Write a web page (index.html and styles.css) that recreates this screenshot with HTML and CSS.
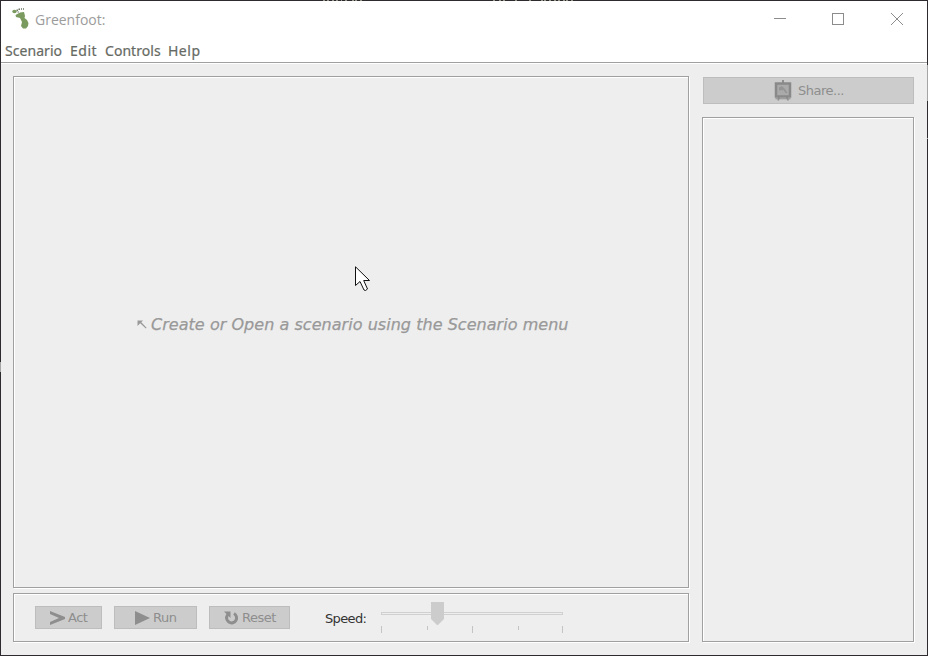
FILE: index.html
```
<!DOCTYPE html>
<html lang="en">
<head>
<meta charset="utf-8">
<title>Greenfoot</title>
<link rel="stylesheet" href="styles.css">
</head>
<body>
<div class="window">
  <header class="titlebar">
    <svg class="logo" width="18" height="22" viewBox="0 0 18 22">
      <path d="M3.500 7L8 4.500L12 4L13 8L12.500 10L15 12L16.500 15L16 18L14 20.500H11L9 18L10 14L8 10L4 9Z" fill="#7a9a60"/>
      <ellipse cx="2.500" cy="3.500" rx="2.200" ry="1.700" fill="#7a9a60"/>
      <path d="M4.500 1.500h1.500v1.500h-1.500zM6.500 .5h1.500v1.500h-1.500zM9 .3h1v1.500h-1zM11 .3h1v1.500h-1zM5.500 3.500h1.500v1h-1.500z" fill="#6b7562"/>
    </svg>
    <span class="title">Greenfoot:</span>
    <svg class="controls" width="130" height="14" viewBox="0 0 130 14" fill="none" stroke="#8c8c8c">
      <path d="M0 6.500h12"/>
      <rect x="58.500" y="1.500" width="11" height="11"/>
      <path d="M117 1l12 12M129 1l-12 12"/>
    </svg>
  </header>
  <nav class="menu">
    <span class="m-scenario">Scenario</span><span class="m-edit">Edit</span><span class="m-controls">Controls</span><span class="m-help">Help</span>
  </nav>
  <main class="content">
    <div class="left">
      <section class="etched world">
        <svg class="arrow" width="10" height="9" viewBox="0 0 10 9">
          <path d="M.5 .5H6L4.300 2.200L9.600 7.800L8.800 8.600L3.200 3.200L.5 6Z" fill="#999"/>
        </svg>
        <span class="hint">Create or Open a scenario using the Scenario menu</span>
      </section>
      <section class="etched panel">
        <button class="btn act"><svg width="15" height="14" viewBox="0 0 15 14"><path d="M0 0L15 6v2L0 14v-3L9 7L0 3Z" fill="#8e8e8e"/></svg><span>Act</span></button>
        <button class="btn run"><svg width="15" height="14" viewBox="0 0 15 14"><path d="M0 0L15 7L0 14Z" fill="#8e8e8e"/></svg><span>Run</span></button>
        <button class="btn reset"><svg width="15" height="14" viewBox="0 0 15 14"><path d="M10 2.500A5 5 0 1 1 3.500 4" fill="none" stroke="#8e8e8e" stroke-width="3"/><path d="M0 .5H6.500V7L4.500 5L2 5.500L2.500 3Z" fill="#8e8e8e"/></svg><span>Reset</span></button>
        <span class="speed">Speed:</span>
        <svg class="slider" width="184" height="32" viewBox="0 0 184 32">
          <rect x=".5" y="10.500" width="181" height="2" fill="#eee" stroke="#d0d0d0"/>
          <path d="M50 0h13v17L57 23h-1L50 17Z" fill="#ccc"/>
          <path d="M.5 24v7M46.500 24v4M91.500 24v7M137.500 24v4M181.500 24v7" stroke="#c4c4c4"/>
        </svg>
      </section>
    </div>
    <aside class="right">
      <button class="btn share">
        <svg width="18" height="21" viewBox="0 0 18 21">
          <path d="M8 0h2v3h-2zM4 17h2l-1 3.500H3.500zM12 17h2l.8 3.500h-1.600zM1.500 18.300h15v.9h-15z" fill="#8e8e8e"/>
          <rect x="2" y="3.500" width="14" height="13" fill="#aaa" stroke="#898989" stroke-width="2.500"/>
          <path d="M5 7.500l3-1.500 2 2 1 1 2.500 4h-2l-2-3-4.500 .5Z" fill="#959595"/>
        </svg><span>Share...</span>
      </button>
      <section class="etched classes"></section>
    </aside>
  </main>
  <svg class="cursor" width="16" height="26" viewBox="0 0 16 26"><path d="M.5 .8V19.500L5 15.500L9 24L10.500 24.500L12.500 23L8.700 14.500H14.500Z" fill="#fff" stroke="#111"/></svg>
  <i class="edge"></i><i class="edge edge-low"></i><i class="edge edge-left"></i>
  <svg class="edge-top" width="260" height="1" viewBox="0 0 260 1"><path d="M0 .5h2M4 .5h2M9 .5h2M13 .5h2M18 .5h1M22 .5h2M29 .5h2M32 .5h2M37 .5h2M170 .5h2M176 .5h2M180 .5h2M192 .5h2M206 .5h2M218 .5h2M221 .5h2M226 .5h2M231 .5h2M235 .5h2M240 .5h2M243 .5h2M248 .5h2" stroke="#96958a"/></svg>
</div>
</body>
</html>
```
FILE: styles.css
```
* { box-sizing: border-box; }
body { margin: 0; }
.window {
  position: relative;
  width: 928px;
  height: 656px;
  border: 1px solid #2d2b2e;
  background: #eee;
  display: flex;
  flex-direction: column;
}
.titlebar {
  height: 36px;
  padding: 0 23px 0 11px;
  background: #fff;
  display: flex;
  align-items: center;
}
.title {
  margin-left: 5px;
  padding-top: 1px;
  font: 14px/20px "Open Sans", sans-serif;
  color: #9c9c9c;
}
.controls { margin-left: auto; }
.menu {
  height: 26px;
  flex: none;
  padding: 4px 0 0 4px;
  background: #fff;
  border-bottom: 1px solid #a0a0a0;
  box-shadow: 0 1px #fff;
  display: flex;
  font: 14px/20px "Noto Sans", sans-serif;
  letter-spacing: .05px;
  color: #666a63;
  -webkit-text-stroke: .2px #666a63;
}
.menu span { white-space: nowrap; }
.m-scenario { width: 65px; }
.m-edit { width: 35px; letter-spacing: .5px; }
.m-controls { width: 63px; }
.m-help { letter-spacing: .5px; }
.content {
  flex: 1;
  display: flex;
  gap: 13px;
  padding: 13px 13px 13px 12px;
}
.etched {
  border: 1px solid #a0a0a0;
  box-shadow: 1px 1px #fff, inset 1px 1px #fff;
}
.left { width: 676px; display: flex; flex-direction: column; gap: 5px; }
.world {
  height: 512px;
  display: flex;
  align-items: center;
  padding: 0 0 16px 123px;
}
.hint {
  margin-left: 4px;
  padding-top: 2px;
  white-space: nowrap;
  font: italic 16px/22px "DejaVu Sans", sans-serif;
  letter-spacing: .04px;
  color: #999;
  -webkit-text-stroke: .25px #999;
}
.panel { height: 49px; display: flex; padding: 0 0 0 21px; }
.btn {
  display: flex;
  align-items: center;
  margin: 0;
  padding: 0;
  border: 1px solid #bdbdbd;
  border-radius: 0;
  background: #ccc;
  color: #8e8e8e;
  font: 13px/18px "DejaVu Sans", sans-serif;
  letter-spacing: -.5px;
}
.btn span { white-space: nowrap; }
.panel .btn { height: 23px; margin-top: 12px; }
.act { width: 67px; padding-left: 14px; gap: 3px; }
.run { width: 83px; margin-left: 12px !important; padding-left: 20px; gap: 3px; }
.reset { width: 81px; margin-left: 12px !important; padding-left: 14px; gap: 3px; }
.speed {
  width: 56px;
  margin: 16px 0 0 35px;
  font: 13px/18px "DejaVu Sans", sans-serif;
  letter-spacing: -.65px;
  color: #333;
}
.slider { margin-top: 8px; }
.right { width: 212px; display: flex; flex-direction: column; gap: 13px; }
.share { height: 27px; margin: 1px 0 0 1px; padding-left: 70px; gap: 6px; }
.classes { height: 525px; }
.cursor { position: absolute; left: 354px; top: 265px; }
.edge { position: absolute; right: -1px; top: 64px; width: 1px; height: 36px; background: #a5a5a5; }
.edge-low { top: 137px; height: 1px; }
.edge-left { right: auto; left: -1px; top: 361px; height: 10px; }
.edge-top { position: absolute; left: 322px; top: -1px; }
```
